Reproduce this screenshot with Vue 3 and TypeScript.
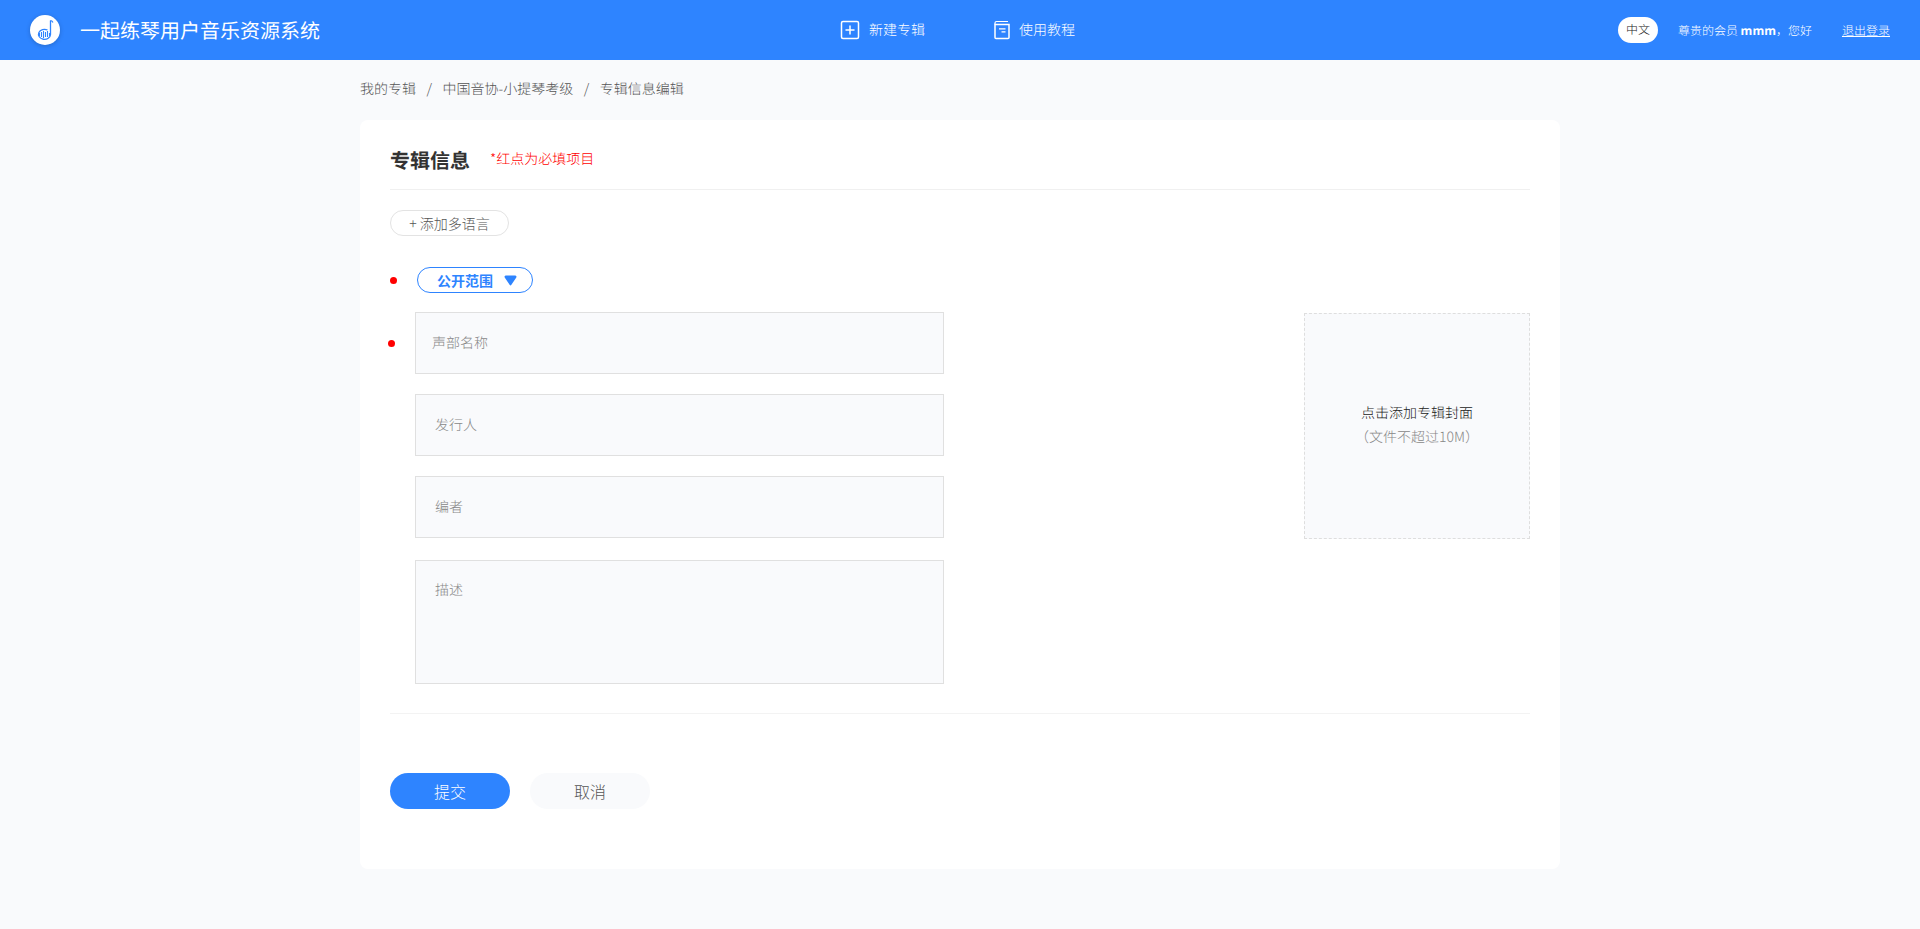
<script setup lang="ts">
const crumbs = ["我的专辑", "中国音协-小提琴考级", "专辑信息编辑"]
</script>

<template>
  <div class="page">
    <header class="topbar">
      <div class="brand">
        <svg class="logo" viewBox="0 0 30 30" aria-hidden="true">
          <circle cx="15" cy="15" r="15" fill="#fff" />
          <path d="M20.500 5.500v14a6 5 0 1 1-3-4.500" fill="none" stroke="#2e84ff" stroke-width="1.300" />
          <path d="M20.500 5.500c1.200.3 2 .9 2.400 2" fill="none" stroke="#2e84ff" stroke-width="1.200" />
          <path d="M9.500 18v3M11.500 17v5M13.500 16v7M15.500 17v5M17.500 16v6M19.500 18v3" stroke="#2e84ff" stroke-width="1.100" />
        </svg>
        <span class="brand-name">一起练琴用户音乐资源系统</span>
      </div>
      <nav class="nav">
        <a class="nav-item">
          <svg class="nav-icon" width="20" height="20" viewBox="0 0 20 20" fill="none" stroke="#fff" stroke-width="1.500">
            <rect x="1.500" y="1.500" width="17" height="17" rx="1.500" />
            <path d="M10 5.500v9M5.500 10h9" />
          </svg>
          新建专辑
        </a>
        <a class="nav-item">
          <svg class="nav-icon" width="16" height="20" viewBox="0 0 16 20" fill="none" stroke="#fff" stroke-width="1.500">
            <path d="M1 4.500h14v13a1 1 0 0 1-1 1H2a1 1 0 0 1-1-1z" />
            <path d="M1 4.500V3a1.500 1.500 0 0 1 1.500-1.500H14" stroke-width="1.200" />
            <path d="M5 8.800h6.500M7.500 11.800h4" stroke-width="1.200" />
          </svg>
          使用教程
        </a>
      </nav>
      <div class="account">
        <span class="lang">中文</span>
        <span class="greeting">尊贵的会员 <b>mmm</b>，您好</span>
        <a class="logout">退出登录</a>
      </div>
    </header>

    <main class="content">
      <div class="crumbs">
        <template v-for="(c, i) in crumbs" :key="c">
          <span v-if="i > 0" class="crumb-sep">/</span>
          <span>{{ c }}</span>
        </template>
      </div>

      <section class="card">
        <div class="card-head">
          <h2>专辑信息</h2>
          <span class="hint">*红点为必填项目</span>
        </div>

        <button class="add-lang" type="button">+ 添加多语言</button>

        <div class="scope-row">
          <i class="dot"></i>
          <button class="scope" type="button">
            公开范围
            <svg width="13" height="11" viewBox="0 0 13 11"><path d="M1.800.5h9.400a1.300 1.300 0 0 1 1.100 2L7.400 9.800a1.100 1.100 0 0 1-1.800 0L.7 2.500A1.300 1.300 0 0 1 1.800.5z" fill="#2e84ff" /></svg>
          </button>
        </div>

        <div class="form-body">
          <div class="fields">
            <div class="field first"><i class="dot"></i>声部名称</div>
            <div class="field">发行人</div>
            <div class="field">编者</div>
            <div class="field area">描述</div>
          </div>
          <div class="cover">
            <p>点击添加专辑封面</p>
            <p class="cover-sub">（文件不超过10M）</p>
          </div>
        </div>

        <div class="actions">
          <button class="btn primary" type="button">提交</button>
          <button class="btn" type="button">取消</button>
        </div>
      </section>
    </main>
  </div>
</template>

<style>
html, body { margin: 0; background: #f9fafc; }
</style>

<style scoped>
.page {
  min-height: 929px;
  background: #f9fafc;
  font-family: "Noto Sans CJK SC", "Noto Sans", sans-serif;
  font-weight: 300;
  color: #333;
  text-rendering: geometricPrecision;
}
.topbar {
  position: relative;
  display: flex;
  align-items: center;
  justify-content: space-between;
  height: 60px;
  padding: 0 30px;
  background: #2e84ff;
  color: #fff;
}
.brand { display: flex; align-items: center; gap: 20px; }
.logo { width: 30px; height: 30px; filter: drop-shadow(0 1px 2px rgba(0, 0, 0, .2)); }
.brand-name { font-size: 20px; font-weight: 400; line-height: 30px; }
.nav {
  display: flex;
  align-items: center;
  gap: 69px;
  margin-left: -23px;
}
.nav-item { display: flex; align-items: center; gap: 9px; font-size: 14px; line-height: 20px; }
.account { display: flex; align-items: center; font-size: 12px; }
.lang {
  width: 40px;
  height: 26px;
  border-radius: 13px;
  background: #fff;
  color: #222;
  text-align: center;
  line-height: 26px;
}
.greeting { margin-left: 20px; }
.greeting b { font-family: "Open Sans", sans-serif; font-size: 12px; font-weight: 700; }
.logout { margin-left: 30px; text-decoration: underline; }

.content { width: 1200px; margin: 0 auto; }
.crumbs {
  display: flex;
  align-items: center;
  height: 60px;
  padding-bottom: 2px;
  box-sizing: border-box;
  font-size: 14px;
  color: #555;
}
.crumb-sep { margin: 0 10.500px; }
.card {
  height: 749px;
  box-sizing: border-box;
  padding: 0 30px;
  border-radius: 8px;
  background: #fff;
}
.card-head {
  display: flex;
  align-items: center;
  gap: 20px;
  box-sizing: border-box;
  height: 70px;
  padding-top: 9px;
  border-bottom: 1px solid #f0f0f0;
}
.card-head h2 { margin: 0; font-size: 20px; font-weight: 700; color: #333; }
.hint { margin-top: -1px; font-size: 14px; color: #f00; }
.add-lang {
  display: block;
  width: 119px;
  height: 26px;
  margin-top: 20px;
  padding: 0;
  border: 1px solid #e3e3e3;
  border-radius: 13px;
  background: #fff;
  font: inherit;
  font-size: 14px;
  color: #555;
}
.scope-row {
  display: flex;
  align-items: center;
  gap: 20px;
  margin-top: 31px;
}
.dot {
  display: block;
  flex: none;
  width: 7px;
  height: 7px;
  border-radius: 50%;
  background: #f00;
}
.scope {
  display: flex;
  align-items: center;
  gap: 11px;
  box-sizing: border-box;
  width: 116px;
  height: 26px;
  padding: 0 0 0 19px;
  border: 1px solid #2e84ff;
  border-radius: 13px;
  background: #fff;
  font: inherit;
  font-size: 14px;
  font-weight: 700;
  color: #2e84ff;
}
.form-body {
  display: flex;
  justify-content: space-between;
  align-items: flex-start;
  height: 401px;
  margin-top: 19px;
  padding-left: 25px;
  border-bottom: 1px solid #f3f3f3;
}
.fields { display: flex; flex-direction: column; width: 529px; }
.field {
  position: relative;
  display: flex;
  align-items: center;
  box-sizing: border-box;
  height: 62px;
  margin-bottom: 20px;
  padding: 0 0 0 19px;
  border: 1px solid #e0e0e0;
  background: #f9fafc;
  font-size: 14px;
  color: #888;
}
.field.first { padding-left: 16px; }
.field.first .dot { position: absolute; left: -28px; top: 27px; }
.field.area {
  align-items: flex-start;
  height: 124px;
  margin: 2px 0 0;
  padding-top: 19px;
  line-height: 20px;
}
.cover {
  display: flex;
  flex-direction: column;
  align-items: center;
  justify-content: center;
  gap: 4px;
  box-sizing: border-box;
  width: 226px;
  height: 226px;
  margin-top: 1px;
  padding-bottom: 2px;
  border: 1px dashed #dedede;
  background: #f9fafc;
  font-size: 14px;
  color: #222;
}
.cover p { margin: 0; line-height: 20px; }
.cover-sub { color: #888; }
.actions { display: flex; gap: 20px; margin-top: 59px; }
.btn {
  width: 120px;
  height: 36px;
  padding: 0;
  border: 0;
  border-radius: 18px;
  background: #f9fafc;
  font: inherit;
  font-size: 16px;
  color: #555;
}
.btn.primary { background: #2e84ff; color: #fff; }
</style>
